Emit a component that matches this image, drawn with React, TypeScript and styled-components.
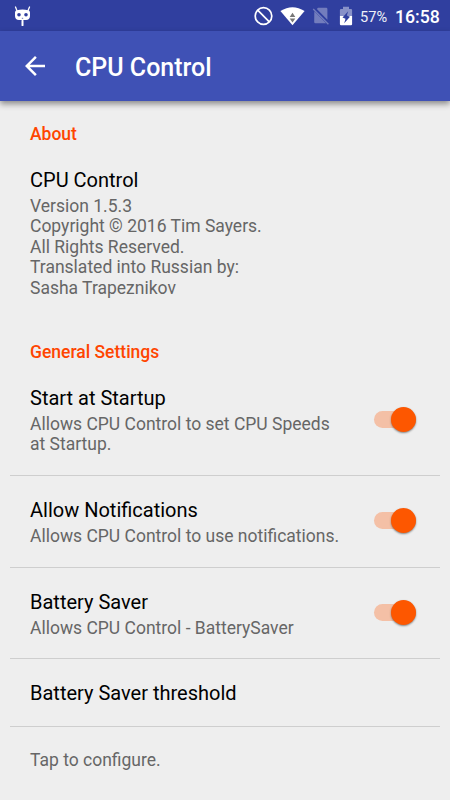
import React from "react";
import styled, { createGlobalStyle } from "styled-components";

const GlobalStyle = createGlobalStyle`
  * { box-sizing: border-box; }
  body { margin: 0; background: #eeeeee; font-family: Roboto, sans-serif; }
`;

const Screen = styled.div`
  width: 450px;
  height: 800px;
  overflow: hidden;
  display: flex;
  flex-direction: column;
  background: #eeeeee;
`;

const StatusBar = styled.div`
  height: 31px;
  flex: none;
  display: flex;
  align-items: center;
  justify-content: space-between;
  padding: 0 10px 0 14px;
  background: #303f9f;
  color: #ffffff;
  svg { display: block; flex: none; }
`;

const StatusGroup = styled.div`
  display: flex;
  align-items: center;
`;

const BatteryLevel = styled.span`
  width: 28px;
  margin: 3px 0 0 7px;
  font-size: 14.6px;
  line-height: 18px;
  white-space: nowrap;
  opacity: 0.92;
`;

const Clock = styled.span`
  width: 45px;
  margin: 2px 0 0 7px;
  font-size: 17.7px;
  font-weight: 500;
  line-height: 22px;
  white-space: nowrap;
`;

const Toolbar = styled.header`
  height: 70px;
  flex: none;
  z-index: 1;
  display: flex;
  align-items: center;
  gap: 25px;
  padding: 0 0 0 20px;
  background: #3f51b5;
  color: #ffffff;
  box-shadow: 0 3px 6px rgba(0, 0, 0, 0.42);
`;

const BackButton = styled.button`
  width: 30px;
  height: 30px;
  padding: 0;
  border: 0;
  background: none;
  color: inherit;
  svg { display: block; }
`;

const ToolbarTitle = styled.h1`
  margin: 3px 0 0;
  font-size: 25px;
  font-weight: 500;
  line-height: 30px;
`;

const Content = styled.main`
  display: flex;
  flex-direction: column;
  padding: 0 10px;
`;

const SectionHeading = styled.h2<{ $top: number }>`
  margin: 0;
  padding: ${(p) => p.$top}px 20px 0;
  font-size: 17.5px;
  font-weight: 500;
  line-height: 20px;
  color: #ff4500;
`;

const Row = styled.section<{ $height: number; $top: number; $divided?: boolean }>`
  height: ${(p) => p.$height}px;
  padding: ${(p) => p.$top}px 24.4px 0 20px;
  display: flex;
  justify-content: space-between;
  border-bottom: ${(p) => (p.$divided ? "1px solid #cecece" : "0")};
`;

const RowText = styled.div`
  max-width: 320px;
`;

const RowTitle = styled.h3`
  margin: 0 0 4px;
  font-size: 20px;
  font-weight: 400;
  line-height: 23px;
  color: #000000;
  white-space: nowrap;
`;

const Summary = styled.p`
  margin: 0;
  font-size: 17.5px;
  line-height: 20.4px;
  color: #666666;
  white-space: pre-line;
`;

const SwitchTrack = styled.div<{ $top: number }>`
  width: 42px;
  height: 17px;
  margin-top: ${(p) => p.$top}px;
  flex: none;
  display: flex;
  align-items: center;
  justify-content: flex-end;
  border-radius: 9px;
  background: #f4c0a6;
`;

const SwitchThumb = styled.div`
  width: 25px;
  height: 25px;
  flex: none;
  border-radius: 50%;
  background: #fd5700;
  box-shadow: 0 1px 2px rgba(0, 0, 0, 0.45);
`;

const CyanogenIcon = () => (
  <svg width="17" height="20" viewBox="0 0 17 20">
    <path d="M1.5 1 L3.2 5.2 M15.5 1 L13.8 5.2" stroke="#fff" strokeWidth="1.3" fill="none" strokeLinecap="round" />
    <path d="M3 4.2 Q8.5 2.6 14 4.2 Q16.3 4.6 16 7.8 V10 Q15.8 14 12 14 H5 Q1.2 14 1 10 V7.8 Q.7 4.6 3 4.2Z" fill="#fff" />
    <circle cx="5" cy="8.8" r="1.8" fill="#303f9f" />
    <circle cx="12" cy="8.8" r="1.8" fill="#303f9f" />
    <path d="M7.8 12.3h1.4" stroke="#303f9f" strokeWidth=".7" />
    <path d="M8.5 14.8v4.4" stroke="#fff" strokeWidth="2" strokeLinecap="round" />
  </svg>
);

const BlockedIcon = () => (
  <svg width="19" height="20" viewBox="0 0 19 20" fill="none" stroke="#fff" strokeWidth="1.7">
    <circle cx="9.5" cy="10" r="8.3" />
    <path d="M3.7 4.2 L15.3 15.8" />
  </svg>
);

const WifiIcon = () => (
  <svg width="25" height="20" viewBox="0 0 25 20">
    <path d="M0.4 5 Q12.5 -2.6 24.6 5 L12.5 19.3Z" fill="#fff" />
    <path d="M12.5 6.7 L15.3 11 H9.7Z M9.7 12.4 H15.3 L12.5 16.6Z" fill="#777777" />
  </svg>
);

const NoSimIcon = () => (
  <svg width="18" height="20" viewBox="0 0 18 20">
    <path d="M6 1.7 H14.2 Q15.4 1.7 15.4 2.9 V13.8 L4.8 3.1Z M2.3 5.3 L14.1 17.3 H3.4 Q2.2 17.3 2.2 16Z" fill="#737dbd" />
    <path d="M1.2 3 L16.4 18.3" stroke="#737dbd" strokeWidth="1.3" />
  </svg>
);

const BatteryIcon = () => (
  <svg width="14" height="20" viewBox="0 0 14 20">
    <path d="M4 .8 H10 V3 H12 Q13.1 3 13.1 4 V10 H.9 V4 Q.9 3 2 3 H4Z" fill="#8891c8" />
    <path d="M.9 10 H13.1 V18 Q13.1 19.2 12 19.2 H2 Q.9 19.2 .9 18Z" fill="#fff" />
    <path d="M9.2 5.2 L3.5 11.4 L6.5 12.7 L5.2 17.2 L11 10.8 L7.8 9.6Z" fill="#303f9f" />
  </svg>
);

const BackIcon = () => (
  <svg width="30" height="30" viewBox="0 0 24 24" fill="#fff">
    <path d="M20 11H7.83l5.59-5.59L12 4l-8 8 8 8 1.41-1.41L7.83 13H20v-2z" />
  </svg>
);

const IconSlot = styled.span<{ $left: number }>`
  margin-left: ${(p) => p.$left}px;
`;

const Switch = ({ top }: { top: number }) => (
  <SwitchTrack $top={top} role="switch" aria-checked="true">
    <SwitchThumb />
  </SwitchTrack>
);

export default function App() {
  return (
    <Screen>
      <GlobalStyle />
      <StatusBar>
        <CyanogenIcon />
        <StatusGroup>
          <BlockedIcon />
          <IconSlot $left={7}><WifiIcon /></IconSlot>
          <IconSlot $left={7}><NoSimIcon /></IconSlot>
          <IconSlot $left={9}><BatteryIcon /></IconSlot>
          <BatteryLevel>57%</BatteryLevel>
          <Clock>16:58</Clock>
        </StatusGroup>
      </StatusBar>
      <Toolbar>
        <BackButton aria-label="Back"><BackIcon /></BackButton>
        <ToolbarTitle>CPU Control</ToolbarTitle>
      </Toolbar>
      <Content>
        <SectionHeading $top={23}>About</SectionHeading>
        <Row $height={175} $top={25}>
          <RowText>
            <RowTitle>CPU Control</RowTitle>
            <Summary>{"Version 1.5.3\nCopyright © 2016 Tim Sayers.\nAll Rights Reserved.\nTranslated into Russian by:\nSasha Trapeznikov"}</Summary>
          </RowText>
        </Row>
        <SectionHeading $top={23}>General Settings</SectionHeading>
        <Row $height={114} $top={25} $divided>
          <RowText>
            <RowTitle>Start at Startup</RowTitle>
            <Summary>{"Allows CPU Control to set CPU Speeds\nat Startup."}</Summary>
          </RowText>
          <Switch top={24} />
        </Row>
        <Row $height={92} $top={23} $divided>
          <RowText>
            <RowTitle>Allow Notifications</RowTitle>
            <Summary>Allows CPU Control to use notifications.</Summary>
          </RowText>
          <Switch top={13.4} />
        </Row>
        <Row $height={91} $top={23} $divided>
          <RowText>
            <RowTitle>Battery Saver</RowTitle>
            <Summary>Allows CPU Control - BatterySaver</Summary>
          </RowText>
          <Switch top={13} />
        </Row>
        <Row $height={68} $top={23} $divided>
          <RowTitle>Battery Saver threshold</RowTitle>
        </Row>
        <Row $height={73} $top={23}>
          <Summary>Tap to configure.</Summary>
        </Row>
      </Content>
    </Screen>
  );
}
